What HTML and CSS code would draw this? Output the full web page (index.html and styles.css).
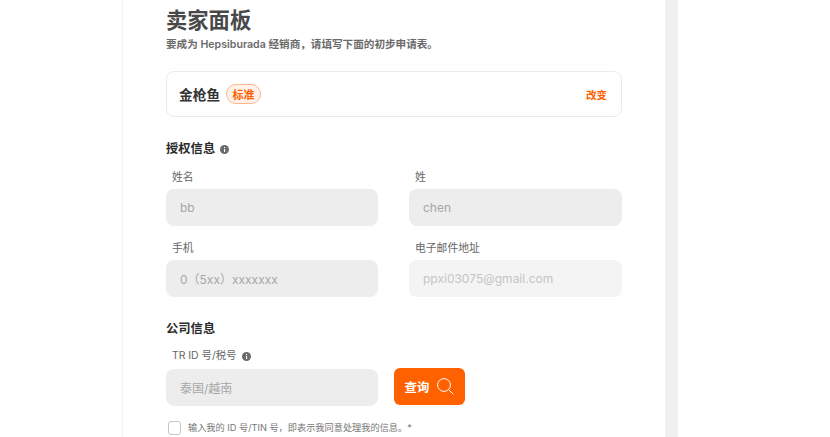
FILE: index.html
```html
<!DOCTYPE html>
<html lang="zh">
<head>
<meta charset="utf-8">
<title>卖家面板</title>
<link rel="stylesheet" href="styles.css">
</head>
<body>
<div class="page">
  <main class="card">
    <h1 class="title">卖家面板</h1>
    <p class="subtitle">要成为 Hepsiburada 经销商，请填写下面的初步申请表。</p>
    <section class="plan">
      <div class="plan-name">金枪鱼<span class="badge">标准</span></div>
      <a class="change">改变</a>
    </section>
    <h2 class="section auth">授权信息
      <svg class="info" width="9" height="9" viewBox="0 0 9 9"><circle cx="4.5" cy="4.5" r="4.5" fill="#6b6b6b"/><rect x="4" y="4" width="1.1" height="3" fill="#fff"/><rect x="4" y="2" width="1.1" height="1.1" fill="#fff"/></svg>
    </h2>
    <div class="grid">
      <div class="field"><label class="label">姓名</label><div class="input">bb</div></div>
      <div class="field"><label class="label">姓</label><div class="input">chen</div></div>
      <div class="field"><label class="label">手机</label><div class="input">0（5xx）xxxxxxx</div></div>
      <div class="field"><label class="label">电子邮件地址</label><div class="input light">ppxi03075@gmail.com</div></div>
    </div>
    <h2 class="section company">公司信息</h2>
    <label class="label tax">TR ID 号/税号
      <svg class="info" width="9" height="9" viewBox="0 0 9 9"><circle cx="4.5" cy="4.5" r="4.5" fill="#6b6b6b"/><rect x="4" y="4" width="1.1" height="3" fill="#fff"/><rect x="4" y="2" width="1.1" height="1.1" fill="#fff"/></svg>
    </label>
    <div class="query-row">
      <div class="input query-input">泰国/越南</div>
      <button class="query">查询
        <svg width="17" height="17" viewBox="0 0 17 17" fill="none" stroke="#fff" stroke-width="1"><circle cx="7" cy="7" r="6.4"/><path d="M11.6 11.6 L16.4 16.4"/></svg>
      </button>
    </div>
    <div class="consent"><span class="checkbox"></span><span>输入我的 ID 号/TIN 号，即表示我同意处理我的信息。*</span></div>
  </main>
  <div class="strip"></div>
</div>
</body>
</html>
```
FILE: styles.css
```css
* { box-sizing: border-box; }
html, body { margin: 0; height: 100%; overflow: hidden; background: #fff; }
body { font-family: Inter, "Noto Sans CJK SC", sans-serif; color: #484848; }
.page { display: flex; height: 437px; padding-left: 122px; }
.card { width: 543px; height: 437px; padding: 6px 43px 0 43px; border-left: 1px solid #f3f3f3; background: #fff; overflow: hidden; flex: none; }
.strip { width: 13px; height: 437px; background: #f0f0f0; flex: none; }
.title { margin: 0; font-size: 21.3px; line-height: 28px; font-weight: 700; color: #484848; }
.subtitle { margin: 3px 0 0; font-size: 10.6px; line-height: 16px; font-weight: 600; color: #6b6b6b; }
.plan { display: flex; justify-content: space-between; align-items: center; width: 456px; height: 46px; margin-top: 18px; padding: 0 14px 0 12px; border: 1px solid #ebebeb; border-radius: 8px; }
.plan-name { display: flex; align-items: center; font-size: 13.7px; font-weight: 700; color: #333; }
.badge { display: inline-flex; align-items: center; justify-content: center; width: 35px; height: 20px; margin-left: 6px; font-size: 11px; font-weight: 600; color: #ff6000; background: #fff3ec; border: 1px solid #ffb48a; border-radius: 10px; }
.change { font-size: 10.5px; font-weight: 700; color: #ff6000; }
.section { display: flex; align-items: center; margin: 0; font-size: 12.3px; line-height: 18px; font-weight: 700; color: #2b2b2b; }
.auth { margin-top: 23px; gap: 5px; }
.grid { display: grid; grid-template-columns: 212px 213px; column-gap: 31px; row-gap: 13px; width: 456px; margin-top: 10px; }
.label { display: block; height: 21px; padding-top: 2px; padding-left: 6px; font-size: 10.8px; line-height: 16px; color: #666; }
.input { display: flex; align-items: center; height: 37px; padding-left: 14px; font-size: 12px; color: #a6a6a6; background: #ededed; border-radius: 8px; }
.input.light { color: #c4c4c4; background: #f4f4f4; }
.company { margin-top: 23px; }
.tax { display: flex; align-items: center; gap: 6px; margin-top: 10px; height: 16px; padding-top: 0; font-size: 10.4px; }
.query-row { display: flex; align-items: flex-start; gap: 16px; margin-top: 4px; }
.query-input { width: 212px; margin-top: 1px; }
.query { display: flex; align-items: center; justify-content: center; gap: 8px; width: 71px; height: 37px; padding: 0; font-family: inherit; font-size: 12.4px; font-weight: 700; color: #fff; background: #ff6000; border: 0; border-radius: 6px; }
.consent { display: flex; align-items: center; gap: 7px; margin-top: 15px; padding-left: 2px; font-size: 9.2px; line-height: 14px; color: #777; }
.checkbox { width: 13px; height: 14px; border: 1.5px solid #c6c6c6; border-radius: 3px; background: #fff; flex: none; }
```
